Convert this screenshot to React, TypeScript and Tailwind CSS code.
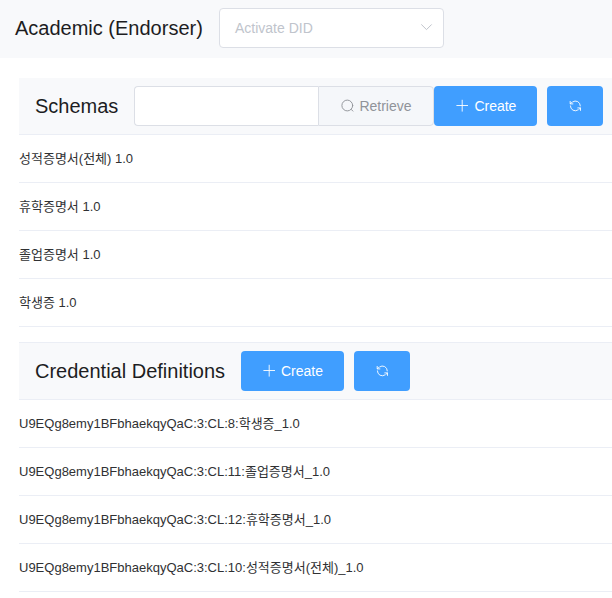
import React from "react";

const schemas = ["성적증명서(전체) 1.0", "휴학증명서 1.0", "졸업증명서 1.0", "학생증 1.0"];

const definitions = [
  "U9EQg8emy1BFbhaekqyQaC:3:CL:8:학생증_1.0",
  "U9EQg8emy1BFbhaekqyQaC:3:CL:11:졸업증명서_1.0",
  "U9EQg8emy1BFbhaekqyQaC:3:CL:12:휴학증명서_1.0",
  "U9EQg8emy1BFbhaekqyQaC:3:CL:10:성적증명서(전체)_1.0",
];

function CreateButton() {
  return (
    <button className="flex h-10 w-[103px] shrink-0 items-center rounded bg-[#409eff] pl-[21px] text-sm text-white">
      <svg className="mr-[5px] h-3.5 w-3.5" viewBox="0 0 14 14" fill="none" stroke="currentColor" strokeWidth="0.9" strokeLinecap="round">
        <path d="M7.2 1.2v11M1.8 6.5h10.8" />
      </svg>
      Create
    </button>
  );
}

function RefreshButton() {
  return (
    <button aria-label="Refresh" className="ml-2.5 flex h-10 w-14 shrink-0 items-center justify-center rounded bg-[#409eff] text-white">
      <svg className="h-3.5 w-3.5" viewBox="0 0 14 14" fill="none" stroke="currentColor" strokeWidth="0.9" strokeLinecap="round" strokeLinejoin="round">
        <path d="M4.6 2.9A4.9 4.9 0 0 1 12.3 6.9" />
        <path d="M2.2 2.4v2.5h2.7" />
        <path d="M2.4 4.7l1.3-1.2" />
        <path d="M10.1 10.9A4.9 4.9 0 0 1 2.4 6.9" />
        <path d="M12.5 11.4V8.9H9.8" />
        <path d="M12.3 9.1L11 10.3" />
      </svg>
    </button>
  );
}

function Rows({ items }: { items: string[] }) {
  return (
    <ul>
      {items.map((item) => (
        <li key={item} className="flex h-12 items-center border-b border-[#ebeef5] text-[13px] whitespace-nowrap text-[#303133]">
          {item}
        </li>
      ))}
    </ul>
  );
}

export default function App() {
  return (
    <div className="h-[598px] w-full overflow-hidden bg-white font-['Liberation_Sans','Noto_Sans_CJK_KR',sans-serif] text-[#1d1d1f]">
      <header className="flex h-[58px] items-center bg-[#f8f9fb] pr-4 pb-0.5 pl-[15px]">
        <h1 className="w-[204px] shrink-0 text-xl whitespace-nowrap">Academic (Endorser)</h1>
        <div className="flex h-10 w-[225px] items-center justify-between rounded border border-[#dcdfe6] bg-white pr-[9px] pl-[15px] text-sm text-[#c0c4cc]">
          Activate DID
          <svg className="mb-0.5 h-3.5 w-3.5" viewBox="0 0 14 14" fill="none" stroke="currentColor" strokeWidth="1" strokeLinecap="round" strokeLinejoin="round">
            <path d="M1.6 4.7l4.9 4.9 4.9-4.9" />
          </svg>
        </div>
      </header>

      <main className="pt-5 pl-[19px]">
        <section>
          <div className="flex h-[57px] items-center border-b border-[#ebeef5] bg-[#f8f9fb] pl-4">
            <h2 className="mr-4 shrink-0 text-xl">Schemas</h2>
            <input aria-label="Schema ID" className="h-10 w-[184px] shrink-0 rounded-l border border-r-0 border-[#dcdfe6] bg-white px-[15px] text-sm outline-none" />
            <button className="flex h-10 w-[116px] shrink-0 items-center rounded-r border border-[#dcdfe6] bg-[#f5f7fa] pl-[21px] text-sm text-[#909399]">
              <svg className="mr-[5px] h-3.5 w-3.5" viewBox="0 0 14 14" fill="none" stroke="currentColor" strokeWidth="0.95" strokeLinecap="round">
                <circle cx="7.3" cy="6.5" r="5.4" />
                <path d="M11.2 10.4l1.7 1.7" />
              </svg>
              Retrieve
            </button>
            <CreateButton />
            <RefreshButton />
          </div>
          <Rows items={schemas} />
        </section>

        <section className="mt-[15px]">
          <div className="flex h-[58px] items-center border-y border-[#ebeef5] bg-[#f8f9fb] pl-4">
            <h2 className="w-[206px] shrink-0 text-xl whitespace-nowrap">Credential Definitions</h2>
            <CreateButton />
            <RefreshButton />
          </div>
          <Rows items={definitions} />
        </section>
      </main>
    </div>
  );
}
